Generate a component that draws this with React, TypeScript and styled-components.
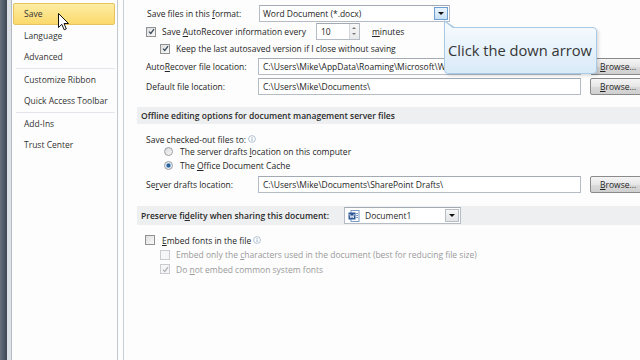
import styled, { createGlobalStyle } from 'styled-components';

const GlobalStyle = createGlobalStyle`
  html, body { margin: 0; padding: 0; background: #fdfdfd; }
  body { font-family: "Open Sans", "Liberation Sans", sans-serif; }
`;

const Screen = styled.div`
  position: relative;
  display: flex;
  width: 640px;
  height: 360px;
  overflow: hidden;
  background: #fdfdfd;
  font-size: 8.5px;
  color: #252525;
`;

const Frame = styled.div`
  flex-shrink: 0;
  width: 7px;
  background: linear-gradient(to right, #66717d, #3d4854);
`;

const FrameGap = styled.div`
  flex-shrink: 0;
  width: 4px;
  background: #dde2e7;
  border-right: 1px solid #b3bac3;
`;

const Sidebar = styled.nav`
  flex-shrink: 0;
  width: 105px;
  padding-top: 3px;
  display: flex;
  flex-direction: column;
  background: #fdfdfd;
  border-right: 1px solid #c3c9d0;
`;

const NavItem = styled.div<{ $active?: boolean }>`
  height: 21.5px;
  box-sizing: border-box;
  margin: 0 2px 0 1px;
  padding-left: 10px;
  display: flex;
  align-items: center;
  color: #333;
  border: 1px solid ${p => (p.$active ? '#e6c35e' : 'transparent')};
  border-radius: 2px;
  background: ${p => (p.$active ? 'linear-gradient(#fdeda4, #fbd96c)' : 'transparent')};
`;

const NavSeparator = styled.div`
  height: 1px;
  margin: 0 2px 0 4px;
  background: #e3e6ea;
`;

const Gutter = styled.div`
  flex-shrink: 0;
  width: 5px;
  background: #fdfdfd;
  border-right: 1px solid #c9ced5;
`;

const Content = styled.main`
  flex: 1;
  padding: 4px 0 0 13px;
  display: flex;
  flex-direction: column;
`;

const Row = styled.div<{ $h: number; $indent?: number; $mt?: number }>`
  display: flex;
  align-items: center;
  height: ${p => p.$h}px;
  margin-top: ${p => p.$mt ?? 0}px;
  padding-left: ${p => p.$indent ?? 9}px;
  white-space: nowrap;
`;

const Label = styled.span<{ $w?: number }>`
  width: ${p => p.$w ?? 112}px;
  flex-shrink: 0;
`;

const Text = styled.span<{ $disabled?: boolean }>`
  color: ${p => (p.$disabled ? '#9a9a9a' : 'inherit')};
`;

const Key = styled.u`
  text-underline-offset: 1px;
`;

const Band = styled.div<{ $h: number; $mt: number }>`
  display: flex;
  align-items: center;
  height: ${p => p.$h}px;
  margin-top: ${p => p.$mt}px;
  padding-left: 4px;
  background: #eeeff1;
  font-weight: 600;
  color: #2b2b2b;
  white-space: nowrap;
`;

const Field = styled.div<{ $w: number }>`
  box-sizing: border-box;
  width: ${p => p.$w}px;
  height: 17px;
  display: flex;
  align-items: center;
  padding-left: 4px;
  background: #fff;
  border: 1px solid #b5bcc6;
  border-top-color: #a3aab4;
  flex-shrink: 0;
  overflow: hidden;
  font-weight: 400;
`;

const Select = styled(Field)`
  padding-left: 3px;
  padding-right: 1px;
  justify-content: space-between;
`;

const DocName = styled.span`
  display: flex;
  align-items: center;
`;

const DropButton = styled.span<{ $hot?: boolean }>`
  box-sizing: border-box;
  width: 14px;
  height: 13px;
  display: flex;
  align-items: center;
  justify-content: center;
  border: 1px solid ${p => (p.$hot ? '#6e9fd0' : '#b9bec5')};
  background: ${p => (p.$hot ? 'linear-gradient(#eaf4fc, #c7e0f5)' : 'linear-gradient(#f7f7f7, #e2e4e7)')};
  &::after {
    content: '';
    border-left: 3px solid transparent;
    border-right: 3px solid transparent;
    border-top: 3px solid #111;
  }
`;

const Spin = styled(Field)`
  margin: 0 12px 0 10px;
  padding-right: 0;
  justify-content: space-between;
`;

const SpinArrows = styled.span`
  width: 9px;
  height: 15px;
  display: flex;
  flex-direction: column;
  border-left: 1px solid #d3d7dc;
  background: linear-gradient(#f7f7f7, #e8e9eb);
  &::before, &::after {
    content: '';
    flex: none;
    margin-left: auto;
    margin-right: auto;
    width: 0;
    height: 0;
    border-left: 2px solid transparent;
    border-right: 2px solid transparent;
  }
  &::before {
    border-bottom: 2px solid #777;
    margin-top: 3px;
  }
  &::after {
    border-top: 2px solid #777;
    margin-top: 4px;
  }
`;

const BrowseButton = styled.button`
  box-sizing: border-box;
  flex-shrink: 0;
  height: 17px;
  width: 60px;
  margin-left: 9px;
  padding: 0 0 0 9px;
  text-align: left;
  font: inherit;
  color: #252525;
  background: linear-gradient(#f5f5f5, #e6e6e6 50%, #dadada 51%, #cfcfcf);
  border: 1px solid #8a8a8a;
  border-radius: 2px;
`;

const CheckBox = styled.span<{ $disabled?: boolean; $mr?: number }>`
  box-sizing: border-box;
  flex-shrink: 0;
  width: 10px;
  height: 10px;
  margin-right: ${p => p.$mr ?? 6}px;
  display: flex;
  align-items: center;
  justify-content: center;
  border: 1px solid ${p => (p.$disabled ? '#c8ccd0' : '#8f9193')};
  background: ${p => (p.$disabled ? '#f6f6f6' : 'linear-gradient(135deg, #dedede, #fafafa)')};
`;

const Radio = styled.span<{ $on?: boolean }>`
  box-sizing: border-box;
  flex-shrink: 0;
  width: 9px;
  height: 9px;
  margin-right: 7px;
  border-radius: 50%;
  border: 1px solid #9a9ea3;
  background: ${p =>
    p.$on
      ? 'radial-gradient(circle, #2c5f92 0 1.6px, #9cc1e3 2.2px, #e8eef4 3px)'
      : 'linear-gradient(135deg, #d9dadb, #f8f8f8)'};
`;

const Callout = styled.div`
  position: absolute;
  left: 444px;
  top: 27px;
  width: 153px;
  height: 47px;
  box-sizing: border-box;
  padding: 0 0 2px 3px;
  display: flex;
  align-items: center;
  font-size: 14.7px;
  color: #363636;
  white-space: nowrap;
  background: linear-gradient(#f4f9fd, #d8eaf8);
  border: 1px solid #a9c9e5;
  border-radius: 0 4px 4px 4px;
  box-shadow: 2px 2px 3px rgba(0, 0, 0, 0.12);
  &::before {
    content: '';
    position: absolute;
    left: -1px;
    top: -8px;
    width: 12px;
    height: 8px;
    background: #a9c9e5;
    clip-path: polygon(0 0, 100% 100%, 0 100%);
  }
  &::after {
    content: '';
    position: absolute;
    left: 0;
    top: -6px;
    width: 9px;
    height: 7px;
    background: #f4f9fd;
    clip-path: polygon(0 0, 100% 100%, 0 100%);
  }
`;

const Pointer = styled.svg`
  position: absolute;
  left: 58px;
  top: 13px;
`;

const Check = ({ faded }: { faded?: boolean }) => (
  <svg width="7" height="7" viewBox="0 0 7 7">
    <path d="M1 3.6 L2.8 5.4 L6 1.2" fill="none" stroke={faded ? '#b0b3b6' : '#3a4a5c'} strokeWidth="1.3" />
  </svg>
);

const Info = () => (
  <svg width="8" height="8" viewBox="0 0 8 8" style={{ marginLeft: 2 }}>
    <circle cx="4" cy="4" r="3.4" fill="#fff" stroke="#9fb3c8" strokeWidth="0.8" />
    <rect x="3.6" y="3.4" width="0.9" height="2.6" fill="#8aa3bd" />
    <rect x="3.6" y="2" width="0.9" height="0.9" fill="#8aa3bd" />
  </svg>
);

const WordIcon = () => (
  <svg width="12" height="12" viewBox="0 0 12 12" style={{ marginRight: 5 }}>
    <rect x="3" y="0.5" width="8" height="11" fill="#fff" stroke="#7a9cc6" />
    <rect x="0.5" y="2.5" width="7" height="7" fill="#2b5797" />
    <path d="M1.8 4 L2.8 8 L4 5.5 L5.2 8 L6.2 4" fill="none" stroke="#fff" strokeWidth="0.8" />
    <rect x="8" y="3" width="2" height="1" fill="#7a9cc6" />
    <rect x="8" y="5" width="2" height="1" fill="#7a9cc6" />
    <rect x="8" y="7" width="2" height="1" fill="#7a9cc6" />
  </svg>
);

const Browse = () => (
  <BrowseButton>
    <Key>B</Key>rowse...
  </BrowseButton>
);

export default function App() {
  return (
    <>
      <GlobalStyle />
      <Screen>
        <Frame />
        <FrameGap />
        <Sidebar>
          <NavItem $active>Save</NavItem>
          <NavItem>Language</NavItem>
          <NavItem>Advanced</NavItem>
          <NavSeparator />
          <NavItem>Customize Ribbon</NavItem>
          <NavItem>Quick Access Toolbar</NavItem>
          <NavSeparator />
          <NavItem>Add-Ins</NavItem>
          <NavItem>Trust Center</NavItem>
        </Sidebar>
        <Gutter />
        <Content>
          <Row $h={18} $indent={10}>
            <Label>
              Save files in this <Key>f</Key>ormat:
            </Label>
            <Select $w={191}>
              <span>Word Document (*.docx)</span>
              <DropButton $hot />
            </Select>
          </Row>
          <Row $h={19}>
            <CheckBox>
              <Check />
            </CheckBox>
            <Text>
              Save <Key>A</Key>utoRecover information every
            </Text>
            <Spin $w={44}>
              <span>10</span>
              <SpinArrows />
            </Spin>
            <Text>
              <Key>m</Key>inutes
            </Text>
          </Row>
          <Row $h={15} $indent={23}>
            <CheckBox>
              <Check />
            </CheckBox>
            <Text>Keep the last autosaved version if I close without saving</Text>
          </Row>
          <Row $h={21}>
            <Label>
              Auto<Key>R</Key>ecover file location:
            </Label>
            <Field $w={323}>C:\Users\Mike\AppData\Roaming\Microsoft\Word\</Field>
            <Browse />
          </Row>
          <Row $h={19}>
            <Label>
              Default f<Key>i</Key>le location:
            </Label>
            <Field $w={323}>C:\Users\Mike\Documents\</Field>
            <Browse />
          </Row>

          <Band $h={17} $mt={11}>Offline editing options for document management server files</Band>
          <Row $h={14} $mt={8}>
            <Text>Save checked-out files to:</Text>
            <Info />
          </Row>
          <Row $h={11} $indent={27}>
            <Radio />
            <Text>
              The server drafts <Key>l</Key>ocation on this computer
            </Text>
          </Row>
          <Row $h={17} $indent={27}>
            <Radio $on />
            <Text>
              The <Key>O</Key>ffice Document Cache
            </Text>
          </Row>
          <Row $h={20}>
            <Label>
              Se<Key>r</Key>ver drafts location:
            </Label>
            <Field $w={323}>C:\Users\Mike\Documents\SharePoint Drafts\</Field>
            <Browse />
          </Row>

          <Band $h={19} $mt={12}>
            <Label $w={203}>
              Preserve fi<Key>d</Key>elity when sharing this document:
            </Label>
            <Select $w={117}>
              <DocName>
                <WordIcon />
                Document1
              </DocName>
              <DropButton />
            </Select>
          </Band>
          <Row $h={16} $mt={7} $indent={8}>
            <CheckBox $mr={7} />
            <Text>
              <Key>E</Key>mbed fonts in the file
            </Text>
            <Info />
          </Row>
          <Row $h={13} $indent={23}>
            <CheckBox $disabled />
            <Text $disabled>
              Embed only the <Key>c</Key>haracters used in the document (best for reducing file size)
            </Text>
          </Row>
          <Row $h={16} $indent={23}>
            <CheckBox $disabled>
              <Check faded />
            </CheckBox>
            <Text $disabled>
              Do <Key>n</Key>ot embed common system fonts
            </Text>
          </Row>
        </Content>

        <Callout>Click the down arrow</Callout>
        <Pointer width="12" height="18" viewBox="0 0 12 18">
          <path d="M0.5 0.5 L0.5 14.5 L3.8 11.3 L6.2 16.8 L8.3 15.9 L6 10.5 L10.5 10.5 Z" fill="#fff" stroke="#111" strokeWidth="1" />
        </Pointer>
      </Screen>
    </>
  );
}
